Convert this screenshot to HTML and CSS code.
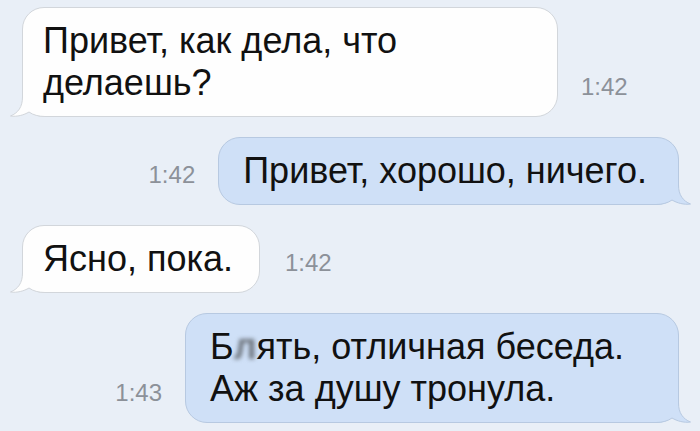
FILE: index.html
```html
<!DOCTYPE html>
<html lang="ru">
<head>
<meta charset="utf-8">
<title>Сообщения</title>
<link rel="stylesheet" href="styles.css">
</head>
<body>
<main class="chat">
  <div class="row row-in">
    <div class="bubble bubble-in bubble-wide">
      <svg class="tail" width="44" height="36" viewBox="0 0 44 36" aria-hidden="true">
        <path class="tail-fill" d="M13.5,0 V16 C13.5,26 9,32 1.5,35 C8,36 15,34 20,31 C24,34 30,35.5 36,35.5 H44 V0 Z"/>
        <path class="tail-line" d="M13.5,0 V16 C13.5,26 9,32 1.5,35 C8,36 15,34 20,31 C24,34 30,35.5 36,35.5 H44"/>
      </svg>
      <span class="text">Привет, как дела, что делаешь?</span>
    </div>
    <span class="time">1:42</span>
  </div>

  <div class="row row-out">
    <span class="time">1:42</span>
    <div class="bubble bubble-out">
      <svg class="tail" width="44" height="36" viewBox="0 0 44 36" aria-hidden="true">
        <path class="tail-fill" d="M13.5,0 V16 C13.5,26 9,32 1.5,35 C8,36 15,34 20,31 C24,34 30,35.5 36,35.5 H44 V0 Z"/>
        <path class="tail-line" d="M13.5,0 V16 C13.5,26 9,32 1.5,35 C8,36 15,34 20,31 C24,34 30,35.5 36,35.5 H44"/>
      </svg>
      <span class="text">Привет, хорошо, ничего.</span>
    </div>
  </div>

  <div class="row row-in">
    <div class="bubble bubble-in">
      <svg class="tail" width="44" height="36" viewBox="0 0 44 36" aria-hidden="true">
        <path class="tail-fill" d="M13.5,0 V16 C13.5,26 9,32 1.5,35 C8,36 15,34 20,31 C24,34 30,35.5 36,35.5 H44 V0 Z"/>
        <path class="tail-line" d="M13.5,0 V16 C13.5,26 9,32 1.5,35 C8,36 15,34 20,31 C24,34 30,35.5 36,35.5 H44"/>
      </svg>
      <span class="text">Ясно, пока.</span>
    </div>
    <span class="time time-far">1:42</span>
  </div>

  <div class="row row-out">
    <span class="time">1:43</span>
    <div class="bubble bubble-out bubble-wide-out">
      <svg class="tail" width="44" height="36" viewBox="0 0 44 36" aria-hidden="true">
        <path class="tail-fill" d="M13.5,0 V16 C13.5,26 9,32 1.5,35 C8,36 15,34 20,31 C24,34 30,35.5 36,35.5 H44 V0 Z"/>
        <path class="tail-line" d="M13.5,0 V16 C13.5,26 9,32 1.5,35 C8,36 15,34 20,31 C24,34 30,35.5 36,35.5 H44"/>
      </svg>
      <span class="text">Б<span class="censored">л</span>ять, отличная беседа. Аж за душу тронула.</span>
    </div>
  </div>
</main>
</body>
</html>
```

FILE: styles.css
```css
html, body {
  margin: 0;
  padding: 0;
}

body {
  width: 700px;
  height: 431px;
  overflow: hidden;
  background: #e9eff7;
  font-family: "Liberation Sans", Arial, sans-serif;
  color: #111;
}

.chat {
  display: flex;
  flex-direction: column;
  gap: 20px;
  padding-top: 7px;
}

.row {
  display: flex;
  align-items: flex-end;
  gap: 23px;
}

.row-in {
  justify-content: flex-start;
  padding-left: 22px;
}

.row-out {
  justify-content: flex-end;
  padding-right: 21px;
}

.bubble {
  position: relative;
  box-sizing: border-box;
  border: 1px solid;
  border-radius: 22px;
  font-size: 36px;
  line-height: 42px;
  padding: 12px 28px 12px 20px;
}

.bubble .text {
  position: relative;
}

.bubble-in {
  background: #fefefe;
  border-color: #d2d6db;
  padding-right: 26px;
}

.bubble-out {
  background: #cfe0f7;
  border-color: #b7c9e1;
  padding: 12px 31px 12px 24px;
}

.bubble-wide {
  max-width: 536px;
}

.bubble-wide-out {
  max-width: 494px;
}

.tail {
  position: absolute;
  bottom: -1px;
  display: block;
}

.bubble-in .tail {
  left: -14px;
}

.bubble-out .tail {
  right: -14px;
  transform: scaleX(-1);
}

.tail-line {
  fill: none;
  stroke-width: 1;
}

.bubble-in .tail-fill { fill: #fefefe; }
.bubble-in .tail-line { stroke: #d2d6db; }
.bubble-out .tail-fill { fill: #cfe0f7; }
.bubble-out .tail-line { stroke: #b7c9e1; }

.time {
  font-size: 24px;
  line-height: 24px;
  color: #8c9199;
  margin-bottom: 18px;
  white-space: nowrap;
}

.time-far {
  margin-left: 2px;
}

/* masked letter: the glyph smudged into a soft grey block */
.censored {
  display: inline-block;
  color: #6d747d;
  font-weight: bold;
  filter: blur(2.2px);
}
```
